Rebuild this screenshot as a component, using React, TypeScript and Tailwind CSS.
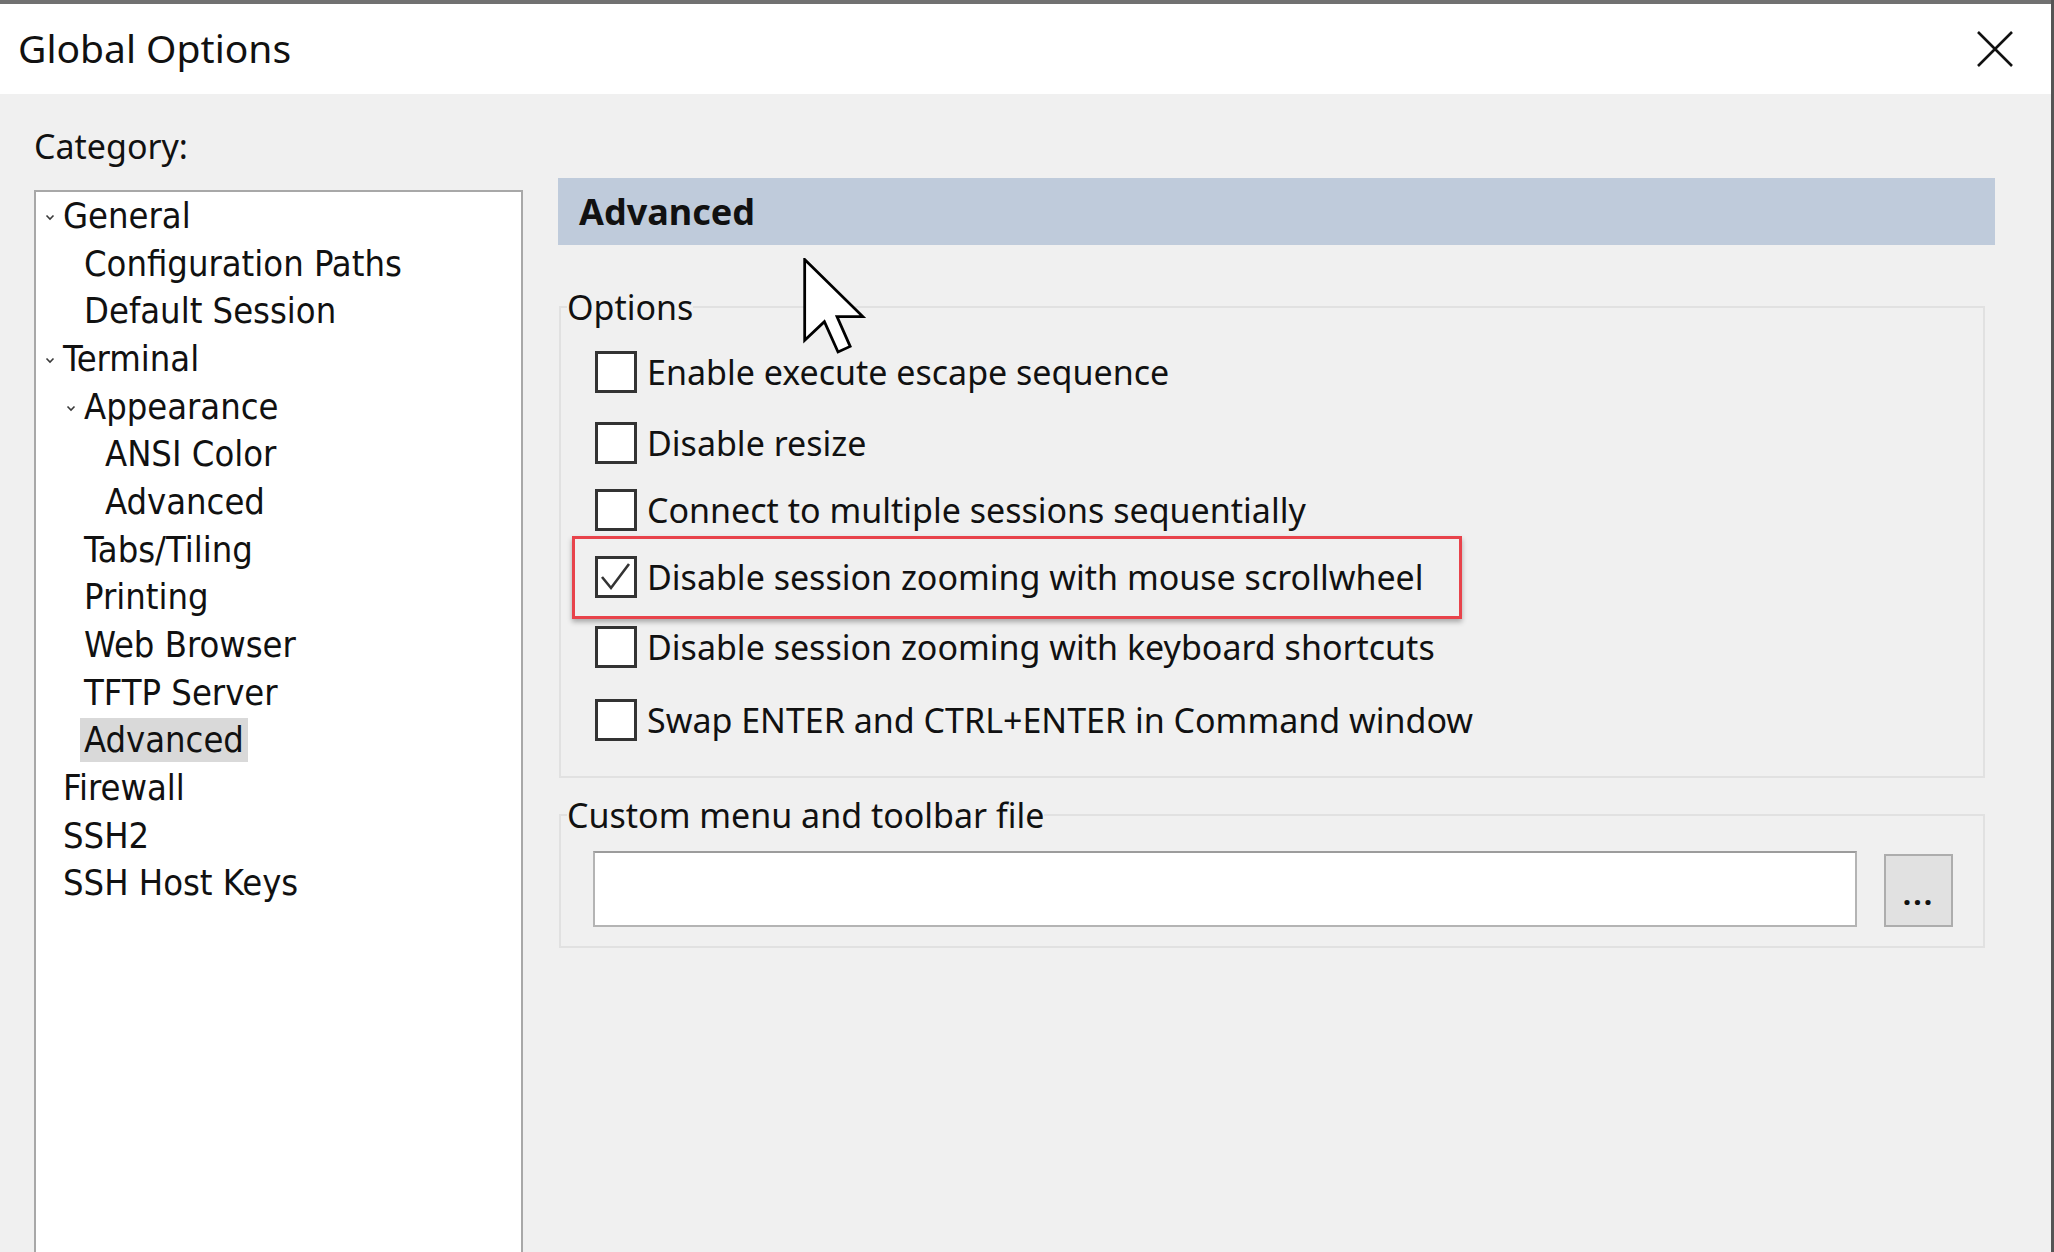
import React from "react";

const SEGOE = { fontFamily: '"Noto Sans", "Open Sans", sans-serif' };
const TAHOMA = { fontFamily: '"DejaVu Sans Condensed", "DejaVu Sans", sans-serif' };

type TreeItem = { label: string; level: 0 | 1 | 2; chevron?: boolean; selected?: boolean };

const tree: TreeItem[] = [
  { label: "General", level: 0, chevron: true },
  { label: "Configuration Paths", level: 1 },
  { label: "Default Session", level: 1 },
  { label: "Terminal", level: 0, chevron: true },
  { label: "Appearance", level: 1, chevron: true },
  { label: "ANSI Color", level: 2 },
  { label: "Advanced", level: 2 },
  { label: "Tabs/Tiling", level: 1 },
  { label: "Printing", level: 1 },
  { label: "Web Browser", level: 1 },
  { label: "TFTP Server", level: 1 },
  { label: "Advanced", level: 1, selected: true },
  { label: "Firewall", level: 0 },
  { label: "SSH2", level: 0 },
  { label: "SSH Host Keys", level: 0 },
];

const levelPad = ["pl-[9px]", "pl-[30px]", "pl-[51px]"];

const options = [
  { label: "Enable execute escape sequence", mt: "mt-[19px]", checked: false },
  { label: "Disable resize", mt: "mt-[27px]", checked: false },
  { label: "Connect to multiple sessions sequentially", mt: "mt-[23px]", checked: false },
  { label: "Disable session zooming with mouse scrollwheel", mt: "mt-[23px]", checked: true, highlight: true },
  { label: "Disable session zooming with keyboard shortcuts", mt: "mt-[26px]", checked: false },
  { label: "Swap ENTER and CTRL+ENTER in Command window", mt: "mt-[29px]", checked: false },
];

function Chevron() {
  return (
    <svg width="10" height="7" viewBox="0 0 10 7" className="mt-[4px]">
      <path d="M1.5 1.5 L5 5 L8.5 1.5" fill="none" stroke="#3a3a3a" strokeWidth="1.6" />
    </svg>
  );
}

function Checkbox({ checked }: { checked: boolean }) {
  return (
    <div className="w-[42px] h-[42px] shrink-0 bg-white border-[3px] border-[#333333] flex items-center justify-center">
      {checked && (
        <svg width="36" height="36" viewBox="0 0 36 36">
          <path d="M4 18 L13 29 L31 5" fill="none" stroke="#333333" strokeWidth="2.6" />
        </svg>
      )}
    </div>
  );
}

export default function App() {
  return (
    <div className="w-[2054px] h-[1252px] overflow-hidden flex flex-col bg-[#f0f0f0] border-r-[3px] border-[#555555] text-black relative" style={SEGOE}>
      {/* top strip of underlying window */}
      <div className="h-[4px] bg-[#717171] shrink-0" />
      {/* Title bar */}
      <div className="h-[90px] shrink-0 bg-white flex items-center justify-between pl-[18px] pr-[38px]">
        <div className="text-[39px] leading-[48px] -mt-[2px] text-[#111]">Global Options</div>
        <svg width="36" height="36" viewBox="0 0 36 36">
          <path d="M1 1 L35 35 M35 1 L1 35" stroke="#111" strokeWidth="2.6" fill="none" />
        </svg>
      </div>
      {/* Body */}
      <div className="flex-1 flex pl-[34px] overflow-hidden">
        {/* Left column */}
        <div className="w-[489px] shrink-0 flex flex-col">
          <div className="mt-[28px] h-[48px] leading-[48px] text-[34px] text-[#111]">Category:</div>
          <div className="mt-[20px] h-[1200px] bg-white border-2 border-[#a8a8a8] shrink-0" style={TAHOMA}>
            {tree.map((t, i) => (
              <div key={i} className={`h-[47.7px] flex items-center ${levelPad[t.level]}`}>
                <div className="w-[18px] shrink-0 flex items-center">{t.chevron && <Chevron />}</div>
                <span
                  className={`text-[36px] leading-[44px] h-[44px] whitespace-nowrap text-[#111] ${
                    t.selected ? "bg-[#d9d9d9] -ml-[4px] px-[4px]" : ""
                  }`}
                >
                  {t.label}
                </span>
              </div>
            ))}
          </div>
        </div>
        {/* Right column */}
        <div className="ml-[35px] w-[1437px] shrink-0 flex flex-col">
          <div className="mt-[84px] h-[67px] bg-[#bfcbdb] flex items-center pl-[21px]">
            <span className="text-[36px] font-bold text-[#111]">Advanced</span>
          </div>

          <fieldset className="mt-[38px] ml-[1px] mr-[10px] border-2 border-[#e1e1e1] pb-[34px]">
            <legend className="ml-[6px] text-[34px] leading-[48px] text-[#111]">Options</legend>
            <div className="flex flex-col pl-[34px]">
              {options.map((o, i) => (
                <div key={i} className={`${o.mt} relative flex w-fit items-center h-[44px]`}>
                  {o.highlight && (
                    <div className="absolute -left-[23px] -top-[19px] -bottom-[20px] -right-[38px] border-[3px] border-[#e8434b] shadow-[0_3px_5px_rgba(0,0,0,0.3)] pointer-events-none" />
                  )}
                  <Checkbox checked={o.checked} />
                  <span className="ml-[10px] text-[34px] leading-[44px] whitespace-nowrap text-[#111]">{o.label}</span>
                </div>
              ))}
            </div>
          </fieldset>

          <fieldset className="mt-[13px] ml-[1px] mr-[10px] border-2 border-[#e1e1e1] pl-[32px] pr-[30px] pb-[19px]">
            <legend className="-ml-[26px] text-[34px] leading-[48px] text-[#111]">Custom menu and toolbar file</legend>
            <div className="mt-[12px] flex items-end gap-[27px]">
              <div className="flex-1 h-[76px] bg-white border-2 border-[#b4b4b4] border-t-[#9c9c9c]" />
              <div className="w-[69px] h-[73px] bg-[#e1e1e1] border-2 border-[#adadad] flex items-center justify-center">
                <span className="text-[30px] font-bold leading-none mt-[6px] tracking-[2px] text-[#111]">...</span>
              </div>
            </div>
          </fieldset>
        </div>
      </div>

      {/* mouse cursor overlay */}
      <svg className="absolute left-[803px] top-[258px]" width="64" height="96" viewBox="0 0 12.6 19">
        <path
          d="M0.3 0.3 L0.3 16.3 L4.2 12.6 L6.9 18.6 L9.3 17.5 L6.7 11.6 L11.8 11.6 Z"
          fill="white"
          stroke="black"
          strokeWidth="0.55"
          strokeLinejoin="miter"
        />
      </svg>
    </div>
  );
}
